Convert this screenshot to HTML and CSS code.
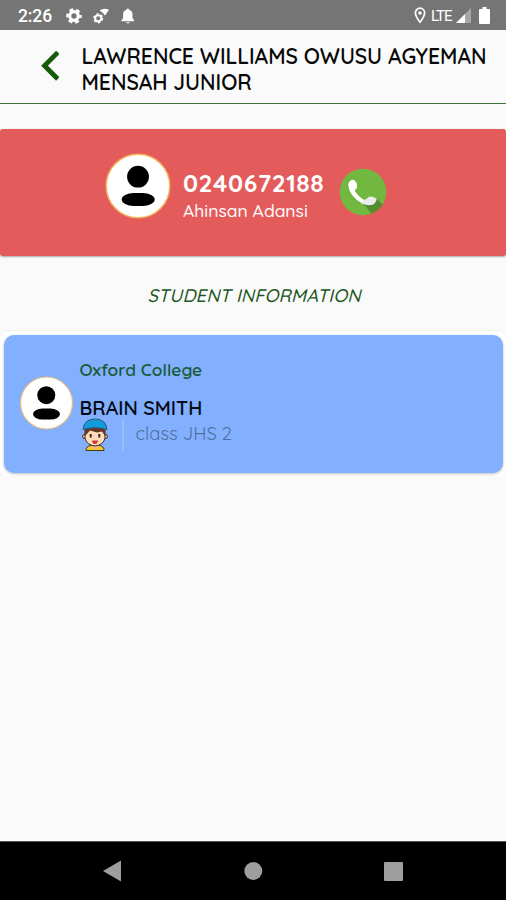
FILE: index.html
```html
<!DOCTYPE html>
<html lang="en">
<head>
<meta charset="utf-8">
<title>Student information</title>
<link rel="stylesheet" href="styles.css">
</head>
<body>
<div class="screen">
  <div class="status">
    <span class="time">2:26</span>
    <svg class="status-left" width="72" height="18" viewBox="0 0 72 18">
      <g fill="none" stroke="#fff">
        <circle cx="9" cy="9" r="4.300" stroke-width="3.200"/>
        <circle cx="9" cy="9" r="6.500" stroke-width="2.600" stroke-dasharray="3.800 3" stroke-dashoffset="1.900"/>
        <circle cx="33.200" cy="11.300" r="3.100" stroke-width="2.100"/>
        <circle cx="33.200" cy="11.300" r="4.400" stroke-width="1.400" stroke-dasharray="2.300 2.300"/>
      </g>
      <path fill="#fff" d="M34.500 3.500Q39 .6 44 2.800L40 8.500 37.500 5.500Z"/>
      <path fill="#fff" d="M56.500 14.300V13l1.600-1.800V7.500q0-3.700 3.300-4.500V2.300q1.400-1.800 2.800 0V3q3.300.8 3.300 4.500v3.700l1.600 1.800v1.300ZM61.200 15.200h3.600q-1.800 2.400-3.600 0Z"/>
    </svg>
    <svg class="pin" width="12" height="17" viewBox="0 0 12 17">
      <path d="M6 1.200a4.600 4.600 0 0 0-4.600 4.600Q1.400 9.400 6 15.200 10.600 9.400 10.600 5.800A4.600 4.600 0 0 0 6 1.200Z" fill="none" stroke="#fff" stroke-width="1.700"/>
      <circle cx="6" cy="6" r="1.800" fill="#fff"/>
    </svg>
    <span class="lte">LTE</span>
    <svg class="signal" width="15" height="15" viewBox="0 0 15 15">
      <path d="M0 15 15 0V15Z" fill="#a8a8a8"/><path d="M0 15 9 6V15Z" fill="#fff"/>
    </svg>
    <svg class="battery" width="11" height="17" viewBox="0 0 11 17"><path d="M3.500 0h4v2H10q1 0 1 1v13q0 1-1 1H1q-1 0-1-1V3q0-1 1-1h2.500Z" fill="#fff"/></svg>
  </div>

  <header class="header">
    <svg class="back" width="20" height="32" viewBox="0 0 20 32"><path d="M18.800 2.400 5.500 15.700 18.800 29" fill="none" stroke="#155a09" stroke-width="4.800"/></svg>
    <h1 class="title"><span class="line title-a">LAWRENCE WILLIAMS OWUSU AGYEMAN</span><span class="line title-b">MENSAH JUNIOR</span></h1>
  </header>

  <section class="contact">
    <svg class="avatar-large" width="66" height="66" viewBox="0 0 66 66">
      <circle cx="33" cy="33" r="31.800" fill="#fff" stroke="#f3b45b" stroke-width="1.500"/>
      <circle cx="33" cy="23.700" r="10.900"/><rect x="16.700" y="40" width="33" height="13" rx="12" ry="6.500"/>
    </svg>
    <div class="contact-text">
      <div class="phone">0240672188</div>
      <div class="place">Ahinsan Adansi</div>
    </div>
    <svg class="call" width="48" height="48" viewBox="0 0 48 48">
      <defs><clipPath id="disc"><circle cx="24" cy="24" r="23.300"/></clipPath></defs>
      <g clip-path="url(#disc)">
        <path d="M0 0H48V48H0Z" fill="#72b840"/>
        <path d="M37.500 30.500 48 41V51H37L23 34Z" fill="#538c31"/>
      </g>
      <path d="M9.800 14.500Q11.500 11 14.800 12 18.600 14 18 19.500L15.800 22.500Q18 27.500 25 32L24 36Q9.800 28 9.300 17Z" fill="#fff"/>
      <path d="M23.500 32Q27.500 32 29.500 29 33.500 27.200 37.800 31 36.500 35.500 33.500 36.800 28.500 38 22.500 35.200Z" fill="#ececec"/>
    </svg>
  </section>

  <h2 class="section-label">STUDENT INFORMATION</h2>

  <div class="student-wrap">
    <article class="student">
      <svg class="avatar-small" width="54" height="54" viewBox="0 0 54 54">
        <circle cx="27.500" cy="27" r="26" fill="#fff" stroke="#e8bc80" stroke-width="1.200"/>
        <circle cx="27.300" cy="19.200" r="9"/><rect x="14" y="32.600" width="27" height="11" rx="9.500" ry="5.500"/>
      </svg>
      <div class="student-text">
        <div class="school">Oxford College</div>
        <div class="name">BRAIN SMITH</div>
        <div class="class-row">
          <svg class="boy" width="28" height="34" viewBox="0 0 28 34">
            <path d="M5 32.500Q5 28 10 27.500H18Q23 28 23 32.500Z" fill="#f5c928" stroke="#49341c"/>
            <path d="M10.500 25h7v4l-3.500 2.500-3.500-2.500Z" fill="#eebc91"/>
            <circle cx="3.500" cy="18.500" r="2" fill="#efbd98" stroke="#3d3027"/>
            <circle cx="24.500" cy="18.500" r="2" fill="#efbd98" stroke="#3d3027"/>
            <path d="M4 11H24V20Q22.500 27 14 28 5.500 27 4 20Z" fill="#ffdcb9" stroke="#45271b"/>
            <path d="M4 18V9H24V18L21 13.500 16 14.500 9 12.500Z" fill="#693621"/>
            <path d="M2 11.500Q3 1 14 1T26 11.500Q14 8 2 11.500Z" fill="#149bdc" stroke="#235878"/>
            <path d="M9.700 16v3.500M18.300 16v3.500" stroke="#302723" stroke-width="2"/>
            <path d="M11 22.500h6q-.5 3.500-3 3.500t-3-3.500" fill="#c93d39"/>
          </svg>
          <span class="divider"></span>
          <span class="class-name">class JHS 2</span>
        </div>
      </div>
    </article>
  </div>

  <nav class="nav">
    <svg width="506" height="58" viewBox="0 0 506 58" fill="#9e9e9e">
      <path d="M103 29 121 18.500V39.500Z"/><circle cx="253.300" cy="29" r="9"/><rect x="384" y="20" width="19" height="19" rx="1"/>
    </svg>
  </nav>
</div>
</body>
</html>
```
FILE: styles.css
```css
* { box-sizing: border-box; }
body { margin: 0; background: #fafafa; font-family: Quicksand, Lato, "Open Sans", sans-serif; }
svg { display: block; flex: none; }
.screen { width: 506px; height: 900px; display: flex; flex-direction: column; background: #fafafa; overflow: hidden; }
.status { height: 30px; flex: none; display: flex; align-items: center; background: #757575; color: #fff; font-family: Roboto, sans-serif; padding: 1px 16px 0 18px; }
.time { width: 47px; font-size: 17.5px; font-weight: 500; letter-spacing: -.1px; }
.pin { margin-left: auto; }
.lte { width: 24px; margin-left: 5px; font-size: 15px; letter-spacing: -1px; }
.signal { margin-left: 1px; }
.battery { margin-left: 8px; }
.header { height: 74px; flex: none; display: flex; border-bottom: 1px solid #3f733d; padding: 13px 0 0 39px; }
.back { margin-top: 7px; }
.title { margin: 0 0 0 22.5px; font-size: 21.2px; line-height: 26px; font-weight: 600; color: #080808; }
.line { display: block; white-space: nowrap; }
.title-a { letter-spacing: -.02px; }
.title-b { letter-spacing: -.05px; }
.contact { height: 127px; flex: none; margin-top: 25px; display: flex; background: #e35b5b; color: #fff; border-radius: 3px; box-shadow: 0 1px 2px #a7a7a7; padding: 24px 0 0 105px; }
.contact-text { width: 156px; margin-left: 12px; padding-top: 16px; white-space: nowrap; }
.phone { font-size: 24.5px; line-height: 28px; font-weight: 700; letter-spacing: .55px; }
.place { font-size: 17.5px; line-height: 26px; font-weight: 500; }
.call { margin-top: 15px; }
.section-label { margin: 27px 0 0 147.5px; font-size: 18.2px; line-height: 26px; font-style: italic; font-weight: 500; letter-spacing: .15px; color: #20561b; white-space: nowrap; }
.student-wrap { height: 146px; flex: none; margin-top: 21px; border-top: 1px solid #f0f0f0; border-radius: 8px; background: #fff; padding: 4px 3px 3px 4px; }
.student { height: 138px; display: flex; padding: 41px 0 0 15px; border-radius: 10px; background: #83afff; box-shadow: 0 1px 3px #bbb; }
.student-text { margin: -18px 0 0 6.5px; white-space: nowrap; }
.school { font-size: 17.3px; line-height: 24px; font-weight: 600; letter-spacing: .05px; color: #185b35; }
.name { margin-top: 14px; font-size: 19.6px; line-height: 24px; font-weight: 600; color: #050a16; }
.class-row { display: flex; align-items: center; height: 34px; margin-top: -2px; }
.boy { margin-left: 1px; }
.divider { width: 2px; height: 32px; margin-left: 13px; background: #9bbcf6; }
.class-name { margin: -3px 0 0 12px; font-size: 18.4px; font-weight: 400; color: #4c709f; }
.nav { height: 59px; flex: none; margin-top: auto; border-top: 1px solid #555; background: #000; }
```
